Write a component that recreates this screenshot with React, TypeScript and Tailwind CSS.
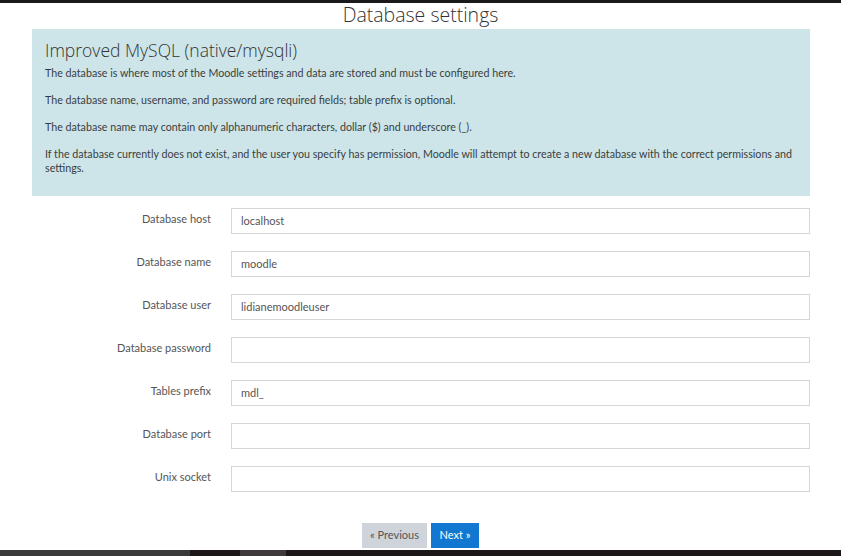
import React from "react";

const fields: { label: string; value: string }[] = [
  { label: "Database host", value: "localhost" },
  { label: "Database name", value: "moodle" },
  { label: "Database user", value: "lidianemoodleuser" },
  { label: "Database password", value: "" },
  { label: "Tables prefix", value: "mdl_" },
  { label: "Database port", value: "" },
  { label: "Unix socket", value: "" },
];

export default function App() {
  return (
    <div
      className="w-[841px] h-[556px] bg-white overflow-hidden flex flex-col text-[#3a3d40]"
      style={{ fontFamily: 'Lato, "Open Sans", sans-serif' }}
    >
      <div className="h-[3px] bg-[#1a1a1a]"></div>

      <h2
        className="text-center text-[19.5px] font-light leading-[24px] text-[#333] h-[26px]"
        style={{ fontFamily: '"Open Sans", sans-serif' }}
      >
        Database settings
      </h2>

      <div className="ml-[32px] w-[778px] h-[167px] bg-[#cde5e9] pl-[13px] pr-[6px] pt-[9px]">
        <h3
          className="text-[17.5px] font-light leading-[24px] text-[#333]"
          style={{ fontFamily: '"Open Sans", sans-serif' }}
        >
          Improved MySQL (native/mysqli)
        </h3>
        <div className="text-[10.7px] leading-[14px] flex flex-col gap-[13px] mt-[4px]">
          <p>
            The database is where most of the Moodle settings and data are
            stored and must be configured here.
          </p>
          <p>
            The database name, username, and password are required fields;
            table prefix is optional.
          </p>
          <p>
            The database name may contain only alphanumeric characters, dollar
            ($) and underscore (_).
          </p>
          <p>
            If the database currently does not exist, and the user you specify
            has permission, Moodle will attempt to create a new database with
            the correct permissions and settings.
          </p>
        </div>
      </div>

      <div className="flex flex-col gap-[17px] mt-[12px]">
        {fields.map((f) => (
          <div key={f.label} className="flex items-start">
            <label className="w-[211px] text-right text-[11px] leading-[14px] pt-[4px] text-[#555]">
              {f.label}
            </label>
            <div className="ml-[20px] w-[579px] h-[26px] border border-[#d6d6d6] bg-white px-[9px] flex items-center text-[11px] text-[#555]">
              {f.value}
            </div>
          </div>
        ))}
      </div>

      <div className="flex justify-center gap-[4px] mt-[31px]">
        <button className="w-[65px] h-[25px] bg-[#ced4da] text-[11px] text-[#555]">
          « Previous
        </button>
        <button className="w-[48px] h-[25px] bg-[#1177d1] text-[11px] text-white">
          Next »
        </button>
      </div>

      <div className="mt-auto h-[6px] flex">
        <div className="w-[190px] bg-[#3a3a3a]"></div>
        <div className="w-[50px] bg-[#1c1818]"></div>
        <div className="w-[46px] bg-[#3f3a3a]"></div>
        <div className="flex-1 bg-[#1c1818]"></div>
      </div>
    </div>
  );
}
